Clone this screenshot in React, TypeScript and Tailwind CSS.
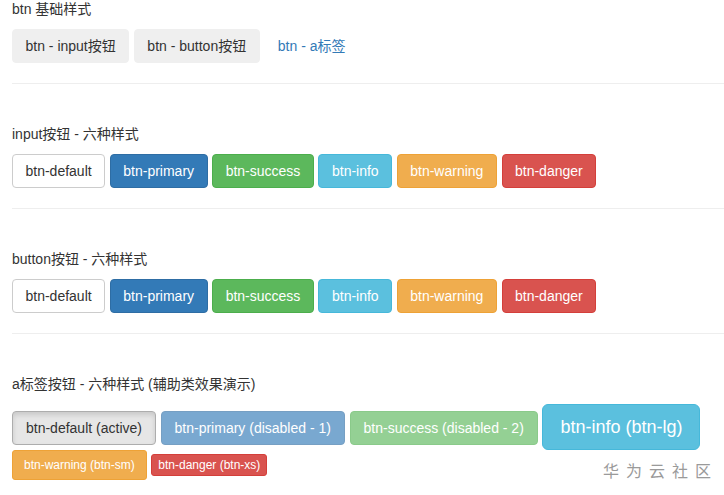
import React from "react";

const base =
  "inline-block border border-solid rounded-[4px] py-[6px] text-[14px] leading-[20px] whitespace-nowrap text-center cursor-pointer";

const six = [
  { t: "btn-default", c: "bg-white border-[#cccccc] text-[#333333]" },
  { t: "btn-primary", c: "bg-[#337ab7] border-[#2e6da4] text-white" },
  { t: "btn-success", c: "bg-[#5cb85c] border-[#4cae4c] text-white" },
  { t: "btn-info", c: "bg-[#5bc0de] border-[#46b8da] text-white" },
  { t: "btn-warning", c: "bg-[#f0ad4e] border-[#eea236] text-white" },
  { t: "btn-danger", c: "bg-[#d9534f] border-[#d43f3a] text-white" },
];

function Section({ title, children, last }: { title: string; children: React.ReactNode; last?: boolean }) {
  return (
    <div>
      <p className="leading-[20px]">{title}</p>
      <div className="mt-[10px] flex flex-wrap items-baseline gap-x-[4.6px]">{children}</div>
      {!last && <div className="mt-[20px] mb-[40px] h-px bg-[#eeeeee]" />}
    </div>
  );
}

export default function App() {
  return (
    <div
      className="relative h-[495px] w-[724px] overflow-hidden bg-white pl-[12px] text-[14px] text-[#333333]"
      style={{ fontFamily: '"Liberation Sans", Arial, "Noto Sans CJK SC", sans-serif' }}
    >
      <div className="-mt-px">
        <Section title="btn 基础样式">
          <span className={`${base} px-[12.5px] bg-[#efefef] border-[#efefef] text-[#333333]`}>btn - input按钮</span>
          <span className={`${base} px-[12.5px] bg-[#efefef] border-[#efefef] text-[#333333]`}>btn - button按钮</span>
          <a className={`${base} px-[12.5px] border-transparent text-[#337ab7]`}>btn - a标签</a>
        </Section>
        <Section title="input按钮 - 六种样式">
          {six.map((b) => (
            <span key={b.t} className={`${base} px-[12.5px] ${b.c}`}>
              {b.t}
            </span>
          ))}
        </Section>
        <Section title="button按钮 - 六种样式">
          {six.map((b) => (
            <span key={b.t} className={`${base} px-[12.5px] ${b.c}`}>
              {b.t}
            </span>
          ))}
        </Section>
        <Section title="a标签按钮 - 六种样式 (辅助类效果演示)" last>
          <a className={`${base} px-[13px] bg-[#e6e6e6] border-[#adadad] text-[#333333] shadow-[inset_0_3px_5px_rgba(0,0,0,0.125)]`}>
            btn-default (active)
          </a>
          <a className={`${base} px-[13px] bg-[#337ab7] border-[#2e6da4] text-white opacity-65`}>btn-primary (disabled - 1)</a>
          <a className={`${base} px-[13px] bg-[#5cb85c] border-[#4cae4c] text-white opacity-65`}>btn-success (disabled - 2)</a>
          <a className="inline-block rounded-[6px] border border-[#46b8da] bg-[#5bc0de] px-[17px] py-[10px] text-[18px] leading-[24px] text-white whitespace-nowrap">
            btn-info (btn-lg)
          </a>
          <a className="inline-block rounded-[3px] border border-[#eea236] bg-[#f0ad4e] px-[11px] py-[5px] text-[12px] leading-[18px] text-white whitespace-nowrap">
            btn-warning (btn-sm)
          </a>
          <a className="inline-block rounded-[3px] border border-[#d43f3a] bg-[#d9534f] px-[6px] py-[1px] text-[12px] leading-[18px] text-white whitespace-nowrap">
            btn-danger (btn-xs)
          </a>
        </Section>
      </div>
      <div
        className="absolute left-[603px] top-[459px] text-[16px] leading-[22px] tracking-[7px] text-[#9a9a9a]"
        style={{ fontFamily: '"Noto Sans CJK SC", sans-serif' }}
      >
        华为云社区
      </div>
    </div>
  );
}
